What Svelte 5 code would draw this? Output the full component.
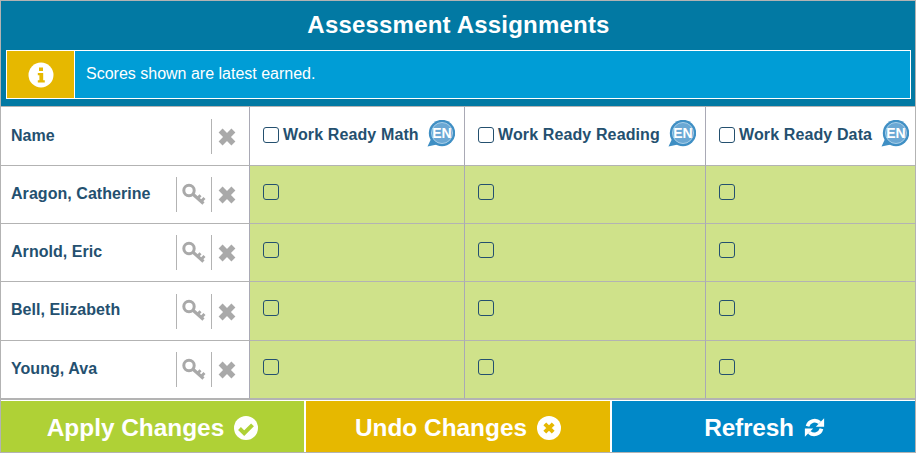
<script>
	const assessments = [
		{ name: "Work Ready Math" },
		{ name: "Work Ready Reading" },
		{ name: "Work Ready Data" }
	];
	const students = ["Aragon, Catherine", "Arnold, Eric", "Bell, Elizabeth", "Young, Ava"];
</script>

{#snippet cross()}
	<svg class="cross" viewBox="0 0 18 18" width="18" height="18">
		<path d="M2.6 2.6 L15.4 15.4 M15.4 2.6 L2.6 15.4" fill="none" stroke="#a9a9a9" stroke-width="5.6" />
	</svg>
{/snippet}

{#snippet key()}
	<svg class="key" viewBox="0 0 24 24" width="24" height="24">
		<circle cx="7" cy="7.5" r="5.2" fill="none" stroke="#a9a9a9" stroke-width="3" />
		<path d="M11 11.2 L21.5 20.5" fill="none" stroke="#a9a9a9" stroke-width="3.2" />
		<path d="M15.5 15.5 L18.5 12.2 M19 18.6 L22.5 15" fill="none" stroke="#a9a9a9" stroke-width="2.8" />
	</svg>
{/snippet}

{#snippet en()}
	<svg class="en" viewBox="0 0 28 28" width="28" height="28">
		<path d="M4 19 L0.5 26.5 L10 24.5 Z" fill="#3f8fc4" />
		<circle cx="15" cy="13" r="13.2" fill="#3f8fc4" />
		<circle cx="15" cy="13" r="10.5" fill="#6ba8d4" stroke="#a9cfe8" stroke-width="1" />
		<text x="15" y="18" text-anchor="middle" class="en-text">EN</text>
	</svg>
{/snippet}

<div class="page">
	<header>
		<h1>Assessment Assignments</h1>
		<div class="notice">
			<div class="notice-icon">
				<svg viewBox="0 0 26 26" width="26" height="26">
					<circle cx="13" cy="13" r="12.5" fill="#fff" />
					<path d="M11 5.5 h4 v3.5 h-4 Z M9.8 11 h5.4 v7.2 h1.6 v2.3 h-7 v-2.3 h1.6 v-4.9 h-1.6 Z" fill="#e6b800" />
				</svg>
			</div>
			<div class="notice-text">Scores shown are latest earned.</div>
		</div>
	</header>

	<div class="grid">
		<div class="cell name head">
			<span class="label">Name</span>
			<span class="tool">{@render cross()}</span>
		</div>
		{#each assessments as a}
			<div class="cell test head">
				<input type="checkbox" />
				<span class="test-name">{a.name}</span>
				{@render en()}
			</div>
		{/each}

		{#each students as s}
			<div class="cell name">
				<span class="label">{s}</span>
				<span class="tool">{@render key()}</span>
				<span class="tool">{@render cross()}</span>
			</div>
			{#each assessments as a}
				<div class="cell score"><input type="checkbox" /></div>
			{/each}
		{/each}
	</div>

	<footer>
		<button class="apply">
			Apply Changes
			<svg viewBox="0 0 24 24" width="24" height="24">
				<circle cx="12" cy="12" r="12" fill="#fff" />
				<path d="M5.5 12.5 L10.2 17.2 L18.5 8.8" fill="none" stroke="#afd136" stroke-width="4" />
			</svg>
		</button>
		<button class="undo">
			Undo Changes
			<svg viewBox="0 0 24 24" width="24" height="24">
				<circle cx="12" cy="12" r="12" fill="#fff" />
				<path d="M7.8 7.8 L16.2 16.2 M16.2 7.8 L7.8 16.2" fill="none" stroke="#e6b800" stroke-width="4" />
			</svg>
		</button>
		<button class="refresh">
			Refresh
			<svg viewBox="0 0 24 24" width="21" height="21">
				<path d="M4 10.5 A8.5 8.5 0 0 1 18 6.5" fill="none" stroke="#fff" stroke-width="4.2" />
				<path d="M23 1.5 V11 H13.5 Z" fill="#fff" />
				<path d="M20 13.5 A8.5 8.5 0 0 1 6 17.5" fill="none" stroke="#fff" stroke-width="4.2" />
				<path d="M1 22.5 V13 H10.5 Z" fill="#fff" />
			</svg>
		</button>
	</footer>
</div>

<style>
	:global(body) {
		margin: 0;
		background: #fff;
	}
	.page {
		width: 916px;
		height: 453px;
		box-sizing: border-box;
		border: 1px solid #b3b3b3;
		font-family: "Liberation Sans", Arial, sans-serif;
		display: flex;
		flex-direction: column;
		overflow: hidden;
	}
	header {
		background: #0279a3;
		height: 105px;
		box-sizing: border-box;
		padding: 0 4px 0 5px;
		flex: none;
	}
	h1 {
		margin: 0;
		height: 49px;
		line-height: 48px;
		text-align: center;
		color: #fff;
		font-size: 24px;
		letter-spacing: 0.2px;
		font-weight: bold;
	}
	.notice {
		display: flex;
		height: 49px;
		box-sizing: border-box;
		border: 1px solid #fff;
	}
	.notice-icon {
		width: 67px;
		background: #e6b800;
		border-right: 1px solid #fff;
		display: flex;
		align-items: center;
		justify-content: center;
	}
	.notice-text {
		flex: 1;
		background: #009dd6;
		color: #fff;
		font-size: 16px;
		line-height: 46px;
		padding-left: 11px;
	}
	.grid {
		display: grid;
		grid-template-columns: 249px 215px 241px 1fr;
		grid-template-rows: 59px 58px 58px 59px 58px;
		flex: none;
		border-top: 1px solid #b3b3b3;
		border-bottom: 1px solid #b3b3b3;
	}
	.cell {
		box-sizing: border-box;
		border-bottom: 1px solid #b3b3b3;
		border-right: 1px solid #a9a9b5;
		display: flex;
		align-items: center;
	}
	.cell:nth-child(4n) {
		border-right: 0;
	}
	.name {
		padding-left: 10px;
		background: #fff;
	}
	.label {
		flex: 1;
		color: #24506f;
		font-size: 16px;
		font-weight: bold;
		letter-spacing: 0.05px;
		margin-bottom: 2px;
	}
	.head .label {
		margin-bottom: 0;
	}
	.tool {
		height: 35px;
		width: 34px;
		box-sizing: border-box;
		border-left: 1px solid #b3b3b3;
		display: flex;
		align-items: center;
		justify-content: center;
		padding: 1px 3px 0 0;
		margin-right: 3px;
	}
	.tool + .tool {
		margin-left: -2px;
		margin-right: 4px;
	}
	.head .tool {
		margin-right: 4px;
	}
	.key {
		margin-left: 3px;
		margin-top: -1px;
	}
	.test {
		padding: 0 0 3px 13px;
		background: #fff;
	}
	.test-name {
		color: #24506f;
		font-size: 16px;
		font-weight: bold;
		letter-spacing: 0.12px;
		margin-left: 4px;
		white-space: nowrap;
		flex: none;
	}
	.en {
		margin-left: 8.5px;
		margin-top: -2px;
		flex: none;
	}
	.en-text {
		font-family: "Liberation Sans", Arial, sans-serif;
		font-size: 14px;
		font-weight: bold;
		fill: #fff;
	}
	.score {
		background: #cfe28a;
		padding: 0 0 6px 13px;
	}
	input[type="checkbox"] {
		appearance: none;
		width: 16px;
		height: 16px;
		margin: 0;
		box-sizing: border-box;
		border: 1.5px solid #24506f;
		border-radius: 3px;
		background: transparent;
		flex: none;
	}
	.test input {
		background: #fff;
	}
	footer {
		display: grid;
		grid-template-columns: 303px 304px 1fr;
		gap: 2px;
		margin-top: 1px;
		flex: 1;
	}
	button {
		border: 0;
		margin: 0;
		padding: 2px 0 0;
		color: #fff;
		font-family: inherit;
		font-size: 24.4px;
		font-weight: bold;
		display: flex;
		align-items: center;
		justify-content: center;
		gap: 10px;
	}
	.apply {
		background: #afd136;
	}
	.undo {
		background: #e6b800;
	}
	.refresh {
		background: #0088c8;
		letter-spacing: -0.2px;
		padding-left: 2px;
	}
</style>
